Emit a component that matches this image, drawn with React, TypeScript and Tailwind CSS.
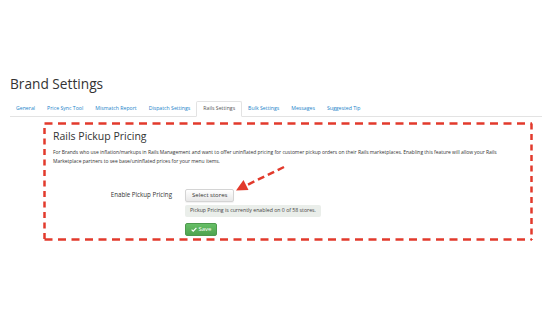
import React from "react";

const tabs = [
  "General",
  "Price Sync Tool",
  "Mismatch Report",
  "Dispatch Settings",
  "Rails Settings",
  "Bulk Settings",
  "Messages",
  "Suggested Tip",
];

function Annotation() {
  const red = "#e23a2c";
  return (
    <svg
      className="absolute left-0 top-0 pointer-events-none"
      width={490}
      height={119}
      viewBox="0 0 490 119"
    >
      <line x1={1.5} y1={1.5} x2={489} y2={1.5} stroke={red} strokeWidth={2.5} strokeDasharray="8 5.5" />
      <line x1={1.5} y1={117.5} x2={489} y2={117.5} stroke={red} strokeWidth={2.5} strokeDasharray="8 5.5" />
      <line x1={1.5} y1={6} x2={1.5} y2={118} stroke={red} strokeWidth={2.5} strokeDasharray="6 4.5" />
      <line x1={488.5} y1={1.5} x2={488.5} y2={118} stroke={red} strokeWidth={2.5} strokeDasharray="6 4.5" />
      <line x1={241} y1={45} x2={203} y2={63.5} stroke={red} strokeWidth={2.5} strokeDasharray="7 4" />
      <polygon points="193,68.5 205.5,68 200.5,58" fill={red} />
    </svg>
  );
}

export default function App() {
  return (
    <div className="w-[552px] h-[311px] bg-white overflow-hidden font-['Open_Sans',sans-serif] text-[#333]">
      <div className="px-[10px] pt-[74px]">
        <h1 className="text-[13.7px] leading-[20px] font-normal">Brand Settings</h1>
        <ul className="mt-[7px] flex h-[16px] border-b border-[#e3e3e3]">
          {tabs.map((t) => {
            const active = t === "Rails Settings";
            return (
              <li
                key={t}
                className={
                  active
                    ? "h-[16px] -mb-px flex items-center px-[6px] text-[5.2px] text-[#555] bg-white border border-[#e3e3e3] border-b-white rounded-t-[2px]"
                    : "h-[16px] flex items-center px-[6px] text-[5.2px] text-[#1b83c9]"
                }
              >
                {t}
              </li>
            );
          })}
        </ul>
        <div className="relative mt-[5px] ml-[33px] mr-[9px] h-[119px] pl-[10px] pt-[7px]">
          <h2 className="text-[10.5px] leading-[14px] font-normal">Rails Pickup Pricing</h2>
          <p className="mt-[4.5px] text-[4.95px] leading-[9.5px] text-[#333] whitespace-nowrap">
            For Brands who use inflation/markups in Rails Management and want to offer uninflated pricing for customer pickup orders on their Rails marketplaces. Enabling this feature will allow your Rails
            <br />
            Marketplace partners to see base/uninflated prices for your menu items.
          </p>
          <div className="mt-[22px] flex">
            <div className="w-[119px] h-[13px] flex items-center justify-end text-[6.2px] text-[#333]">
              Enable Pickup Pricing
            </div>
            <div className="ml-[13px] flex flex-col items-start">
              <div className="h-[13px] px-[6px] flex items-center text-[6px] text-[#333] border border-[#d4d4d4] rounded-[2px] bg-gradient-to-b from-white to-[#e8e8e8] shadow-[0_1px_1px_rgba(0,0,0,0.06)]">
                Select stores
              </div>
              <div className="mt-[3px] h-[12px] px-[5px] flex items-center text-[5.2px] text-[#444] bg-[#eaeeea] rounded-[2px]">
                Pickup Pricing is currently enabled on 0 of 58 stores.
              </div>
              <div className="mt-[6px] h-[13px] w-[32px] flex items-center justify-center gap-[2px] text-[6px] text-white border border-[#4e9a4e] rounded-[2px] bg-gradient-to-b from-[#66bf66] to-[#4fa34f]">
                <svg width="6" height="5" viewBox="0 0 6 5">
                  <polyline points="0.6,2.6 2.2,4.1 5.4,0.8" fill="none" stroke="white" strokeWidth="1.2" />
                </svg>
                Save
              </div>
            </div>
          </div>
          <Annotation />
        </div>
      </div>
    </div>
  );
}
